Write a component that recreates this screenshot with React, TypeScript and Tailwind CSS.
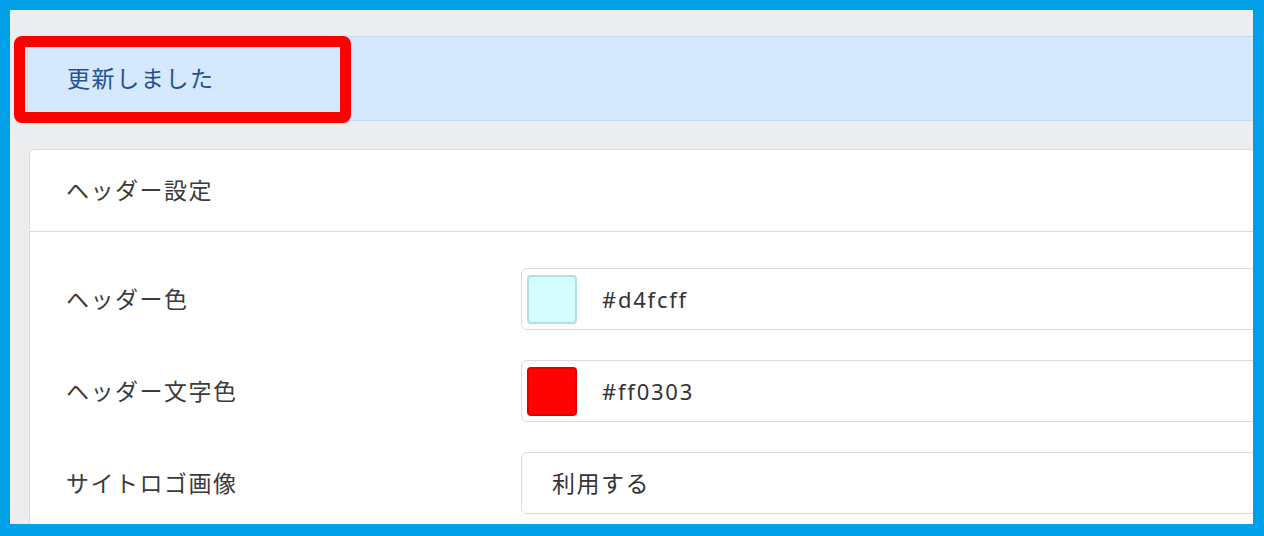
import React from "react";

const font = {
  fontFamily: '"Noto Sans", "Noto Sans CJK JP", sans-serif',
};

interface ColorRowProps {
  label: string;
  color: string;
  border: string;
}

const ColorRow = ({ label, color, border }: ColorRowProps) => (
  <div className="flex items-center">
    <div className="w-[455px] shrink-0 text-[23px] tracking-[0.065em] text-[#3b3b3b]">
      {label}
    </div>
    <div className="flex h-[62px] w-[900px] items-center rounded-[6px] border border-[#d8dbe0] bg-white pl-[5px]">
      <div
        className="h-[49px] w-[50px] rounded-[4px] border-2"
        style={{ backgroundColor: color, borderColor: border }}
      />
      <span className="ml-[25px] text-[22px] tracking-[0.08em] text-[#333]">
        {color}
      </span>
    </div>
  </div>
);

const App = () => {
  return (
    <div
      className="h-[536px] w-[1264px] bg-[#00a0e9] pt-[10px] pl-[10px] pr-[11px] pb-[12px]"
      style={font}
    >
      <div className="relative h-full w-full overflow-hidden bg-[#ebedef]">
        {/* alert */}
        <div className="mt-[26px] ml-[17px] flex h-[85px] w-[1400px] items-center border border-[#c3dbf7] bg-[#d6e8fd] pl-[39px]">
          <span className="text-[23px] tracking-[0.07em] text-[#245290]">
            更新しました
          </span>
        </div>
        {/* annotation box */}
        <div className="absolute left-[4px] top-[26px] h-[87px] w-[337px] rounded-[8px] border-[11px] border-[#ff0000]" />

        {/* card */}
        <div className="mt-[28px] ml-[19px] w-[1400px] rounded-tl-[6px] border border-[#d8dbe0] bg-white">
          <div className="flex h-[82px] items-center border-b border-[#d8dbe0] pl-[36px]">
            <span className="text-[23px] tracking-[0.065em] text-[#3b3b3b]">
              ヘッダー設定
            </span>
          </div>
          <div className="flex flex-col gap-[30px] pl-[36px] pt-[36px] pb-[40px]">
            <ColorRow label="ヘッダー色" color="#d4fcff" border="#b3e0e3" />
            <ColorRow label="ヘッダー文字色" color="#ff0303" border="#e00000" />
            <div className="flex items-center">
              <div className="w-[455px] shrink-0 text-[23px] tracking-[0.065em] text-[#3b3b3b]">
                サイトロゴ画像
              </div>
              <div className="flex h-[62px] w-[900px] items-center rounded-[6px] border border-[#d8dbe0] bg-white pl-[30px]">
                <span className="text-[23px] tracking-[0.065em] text-[#333]">
                  利用する
                </span>
              </div>
            </div>
          </div>
        </div>
      </div>
    </div>
  );
};

export default App;
